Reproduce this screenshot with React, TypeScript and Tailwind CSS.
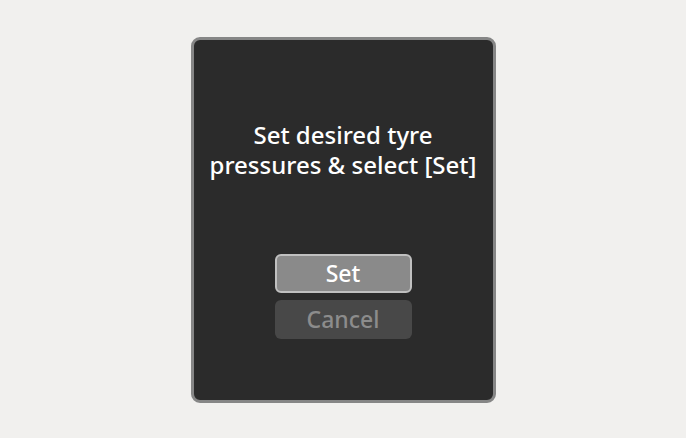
export default function App() {
  return (
    <div className="w-[686px] h-[438px] bg-[#f1f0ee] flex items-start justify-center pt-[37px]" style={{ fontFamily: '"Noto Sans", "Open Sans", sans-serif' }}>
      <div className="w-[305px] h-[366px] rounded-[9px] border-[3px] border-[#868686] bg-[#2b2b2b] flex flex-col items-center pt-[80px]">
        <p className="text-[24px] leading-[30px] font-medium text-white text-center">
          Set desired tyre
          <br />
          pressures &amp; select [Set]
        </p>
        <div className="mt-[74px] flex flex-col gap-[7px]">
          <button className="w-[137px] h-[39px] rounded-[6px] border-2 border-[#c0c0c0] bg-[#8a8a8a] text-white text-[23px] font-medium leading-none">
            Set
          </button>
          <button className="w-[137px] h-[39px] rounded-[6px] bg-[#484848] text-[#8c8c8c] text-[23px] font-medium leading-none">
            Cancel
          </button>
        </div>
      </div>
    </div>
  );
}
